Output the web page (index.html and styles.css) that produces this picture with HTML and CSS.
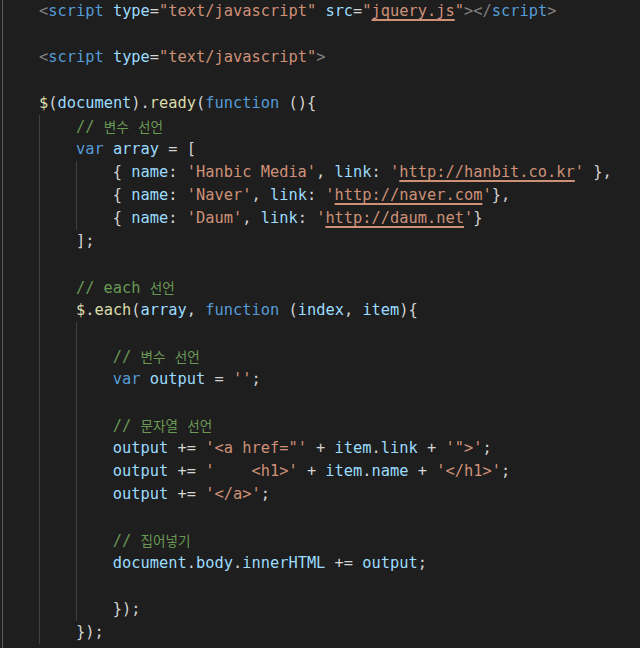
FILE: index.html
```html
<!DOCTYPE html>
<html lang="ko">
<head>
<meta charset="utf-8">
<title>jQuery each</title>
<link rel="stylesheet" href="styles.css">
</head>
<body>
<div class="editor">
<div class="ln g1">    <span class="tg">&lt;</span><span class="kw">script</span> <span class="at">type</span>=<span class="st">"text/javascript"</span> <span class="at">src</span>=<span class="st">"<span class="u">jquery.js</span>"</span><span class="tg">&gt;&lt;/</span><span class="kw">script</span><span class="tg">&gt;</span></div>
<div class="ln g1"></div>
<div class="ln g1">    <span class="tg">&lt;</span><span class="kw">script</span> <span class="at">type</span>=<span class="st">"text/javascript"</span><span class="tg">&gt;</span></div>
<div class="ln g1"></div>
<div class="ln g1">    <span class="fn">$</span>(<span class="at">document</span>).<span class="fn">ready</span>(<span class="kw">function</span> (){</div>
<div class="ln g2">        <span class="cm">// <span class="ko">변수</span> <span class="ko">선언</span></span></div>
<div class="ln g2">        <span class="kw">var</span> <span class="at">array</span> = [</div>
<div class="ln g3">            { <span class="at">name</span>: <span class="st">'Hanbic Media'</span>, <span class="at">link</span>: <span class="st">'<span class="u">http://hanbit.co.kr</span>'</span> },</div>
<div class="ln g3">            { <span class="at">name</span>: <span class="st">'Naver'</span>, <span class="at">link</span>: <span class="st">'<span class="u">http://naver.com</span>'</span>},</div>
<div class="ln g3">            { <span class="at">name</span>: <span class="st">'Daum'</span>, <span class="at">link</span>: <span class="st">'<span class="u">http://daum.net</span>'</span>}</div>
<div class="ln g2">        ];</div>
<div class="ln g2"></div>
<div class="ln g2">        <span class="cm">// each <span class="ko">선언</span></span></div>
<div class="ln g2">        <span class="fn">$</span>.<span class="fn">each</span>(<span class="at">array</span>, <span class="kw">function</span> (<span class="at">index</span>, <span class="at">item</span>){</div>
<div class="ln g3"></div>
<div class="ln g3">            <span class="cm">// <span class="ko">변수</span> <span class="ko">선언</span></span></div>
<div class="ln g3">            <span class="kw">var</span> <span class="at">output</span> = <span class="st">''</span>;</div>
<div class="ln g3"></div>
<div class="ln g3">            <span class="cm">// <span class="ko">문자열</span> <span class="ko">선언</span></span></div>
<div class="ln g3">            <span class="at">output</span> += <span class="st">'&lt;a href="'</span> + <span class="at">item</span>.<span class="at">link</span> + <span class="st">'"&gt;'</span>;</div>
<div class="ln g3">            <span class="at">output</span> += <span class="st">'    &lt;h1&gt;'</span> + <span class="at">item</span>.<span class="at">name</span> + <span class="st">'&lt;/h1&gt;'</span>;</div>
<div class="ln g3">            <span class="at">output</span> += <span class="st">'&lt;/a&gt;'</span>;</div>
<div class="ln g3"></div>
<div class="ln g3">            <span class="cm">// <span class="ko">집어넣기</span></span></div>
<div class="ln g3">            <span class="at">document</span>.<span class="at">body</span>.<span class="at">innerHTML</span> += <span class="at">output</span>;</div>
<div class="ln g3"></div>
<div class="ln g3">            });</div>
<div class="ln g2">        });</div>
<div class="ln g1"></div>
</div>
</body>
</html>
```
FILE: styles.css
```css
html, body {
  margin: 0;
  padding: 0;
  background: #1e1e1e;
}

.editor {
  width: 640px;
  height: 648px;
  overflow: hidden;
  background: #1e1e1e;
  color: #d4d4d4;
  font-family: "DejaVu Sans Mono", "Liberation Mono", monospace;
  font-size: 15.35px;
  padding-left: 2px;
  box-sizing: border-box;
}

.ln {
  height: 23px;
  line-height: 23px;
  white-space: pre;
  background-repeat: no-repeat;
  margin-left: -2px;
  padding-left: 2px;
}

.g1 {
  background-image: linear-gradient(#5c5c5c, #5c5c5c);
  background-position: 2px 0;
  background-size: 1px 100%;
}

.g2 {
  background-image: linear-gradient(#5c5c5c, #5c5c5c), linear-gradient(#404040, #404040);
  background-position: 2px 0, 39px 0;
  background-size: 1px 100%, 1px 100%;
}

.g3 {
  background-image: linear-gradient(#5c5c5c, #5c5c5c), linear-gradient(#404040, #404040), linear-gradient(#404040, #404040);
  background-position: 2px 0, 39px 0, 76px 0;
  background-size: 1px 100%, 1px 100%, 1px 100%;
}

.tg { color: #808080; }
.kw { color: #569cd6; }
.at { color: #9cdcfe; }
.st { color: #ce9178; }
.fn { color: #dcdcaa; }
.cm { color: #6a9955; }

.u {
  text-decoration: underline;
  text-decoration-color: #ce9178;
  text-decoration-thickness: 1.5px;
  text-underline-offset: 3px;
}

.ko {
  font-family: "Noto Sans CJK KR", sans-serif;
  font-size: 13.6px;
}
```
